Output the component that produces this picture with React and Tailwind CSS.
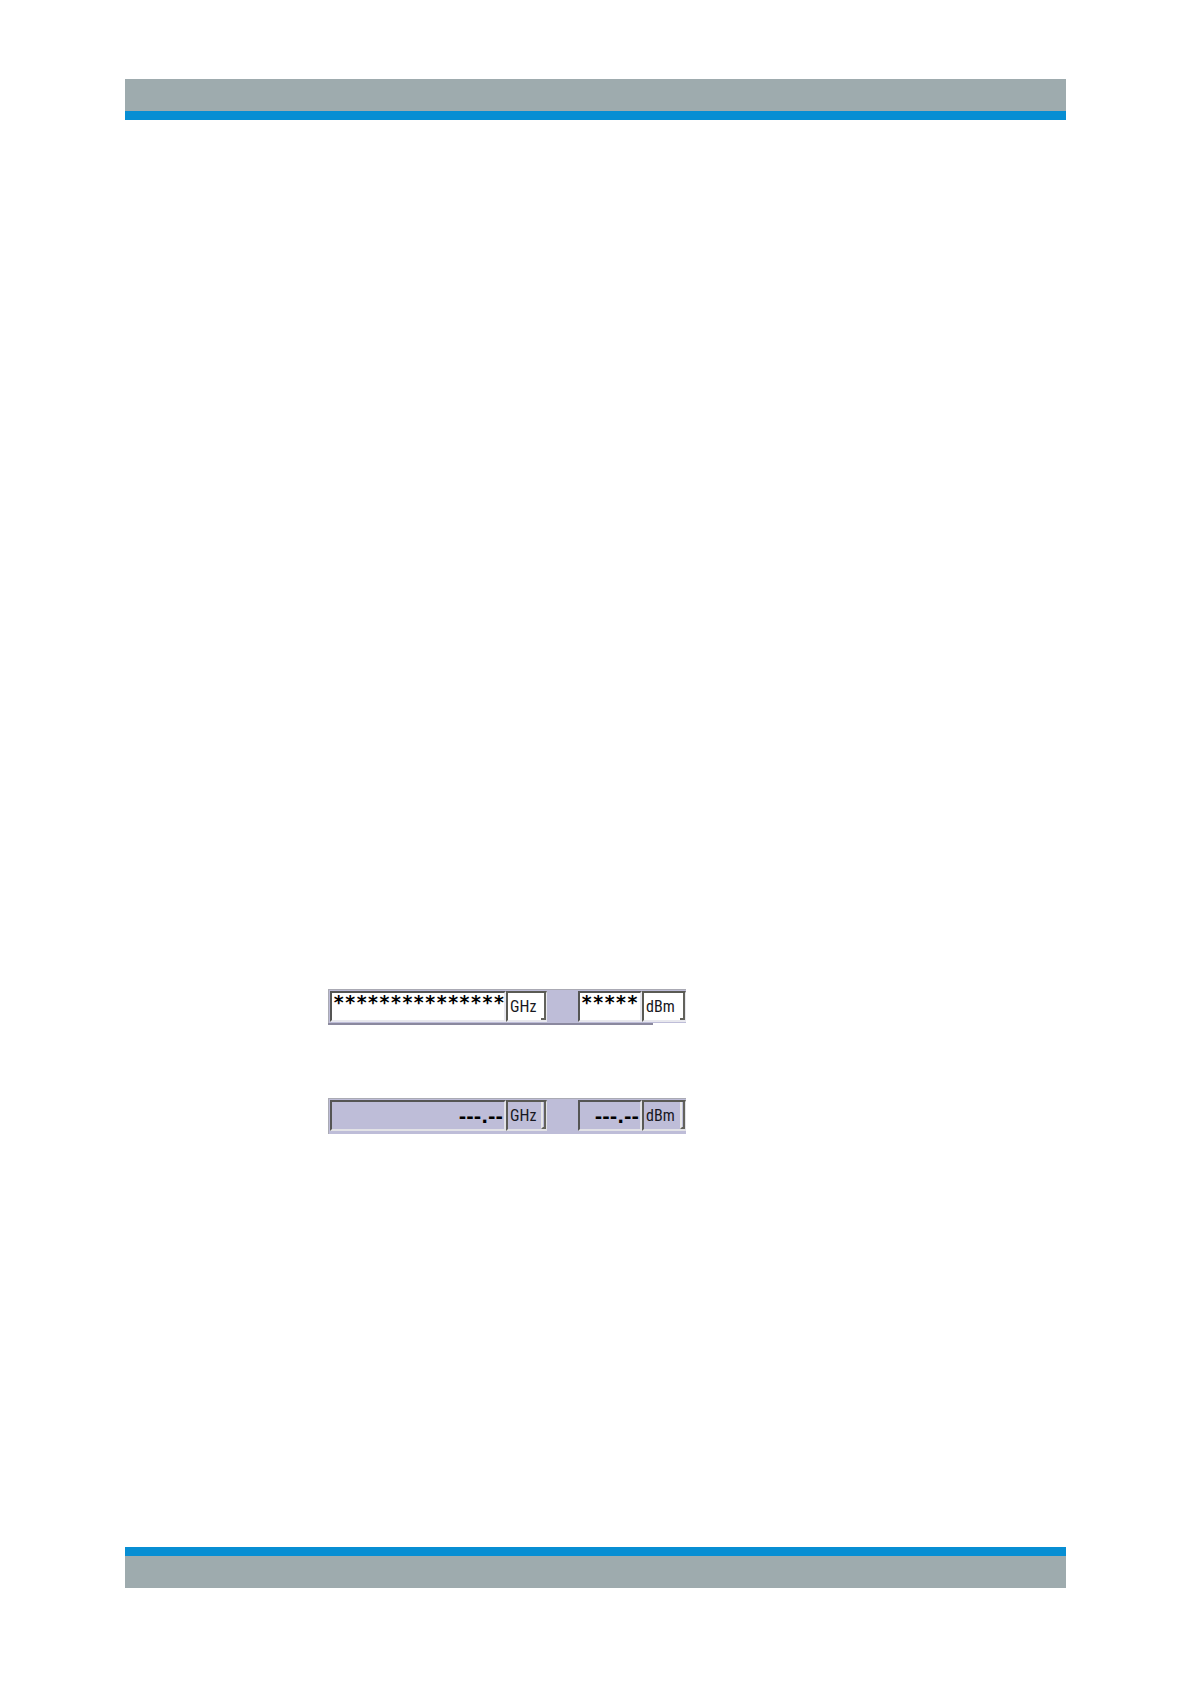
function Field({ label, value, disabled, className, textClass }) {
  return (
    <input
      aria-label={label}
      readOnly
      value={value}
      className={`${className} ${textClass} ${disabled ? "bg-[#bebdd8] border-b-[#e2e2e6] border-r-[#e2e2e6]" : "bg-white border-b-[#e8e8ee] border-r-[#e8e8ee]"} h-[31px] rounded-none border-2 border-t-[#555554] border-l-[#555554] font-bold text-black outline-none`}
    />
  );
}

function Unit({ children, disabled, className }) {
  return (
    <button
      type="button"
      className={`${className} ${disabled ? "bg-[#bebdd8] border-b-[#e2e2e6] border-r-[#e2e2e6]" : "bg-white border-b-[#e8e8ee] border-r-[#e8e8ee]"} flex h-[31px] shrink-0 items-center justify-between border-2 border-r border-t-[#5a5a54] border-l-[#5a5a54] pl-0.5 text-left text-[16px] leading-5 text-[#171722] font-['Roboto_Condensed','Liberation_Sans',sans-serif]`}
    >
      <span>{children}</span>
      <span className={`${disabled ? "border-l-2 border-l-[#e8e8e8]" : ""} h-full w-[5px] shrink-0 border-r-2 border-b-2 border-r-[#62625c] border-b-[#62625c]`} />
    </button>
  );
}

function Readout({ frequency, level, disabled }) {
  const textClass = disabled
    ? "pt-0.5 pr-px text-right text-[18px] leading-5 font-['DejaVu_Sans',sans-serif]"
    : "pb-2.5 pl-px text-left text-[19px] leading-5 font-['DejaVu_Sans_Mono',monospace]";
  return (
    <div className="w-[358px] max-w-full">
      <div className={`${disabled ? "h-9" : "h-[34px]"} flex items-start border-t border-l border-[#aaaab4] bg-[#bebdd8] pt-px pl-px`}>
        <Field label="Frequency" value={frequency} disabled={disabled} className="w-[176px]" textClass={textClass} />
        <Unit disabled={disabled} className="w-[41px]">GHz</Unit>
        <div className="w-[31px] shrink-0" />
        <Field label="Level" value={level} disabled={disabled} className="w-[64px]" textClass={textClass} />
        <Unit disabled={disabled} className="w-[44px]">dBm</Unit>
      </div>
      {!disabled && <div className="h-0.5 w-[325px] bg-[#8b899f]" />}
    </div>
  );
}

export default function App() {
  return (
    <div className="flex min-h-screen flex-col bg-white px-[125px] pt-[79px] pb-24">
      <header className="h-[41px] border-b-9 border-[#078ed3] bg-[#9eabae]" />
      <main className="flex grow flex-col gap-[73px] pt-[869px] pl-[203px]">
        <Readout frequency="***************" level="*****" />
        <Readout frequency="---.--" level="---.--" disabled />
      </main>
      <footer className="h-[41px] border-t-9 border-[#078ed3] bg-[#9eabae]" />
    </div>
  );
}
